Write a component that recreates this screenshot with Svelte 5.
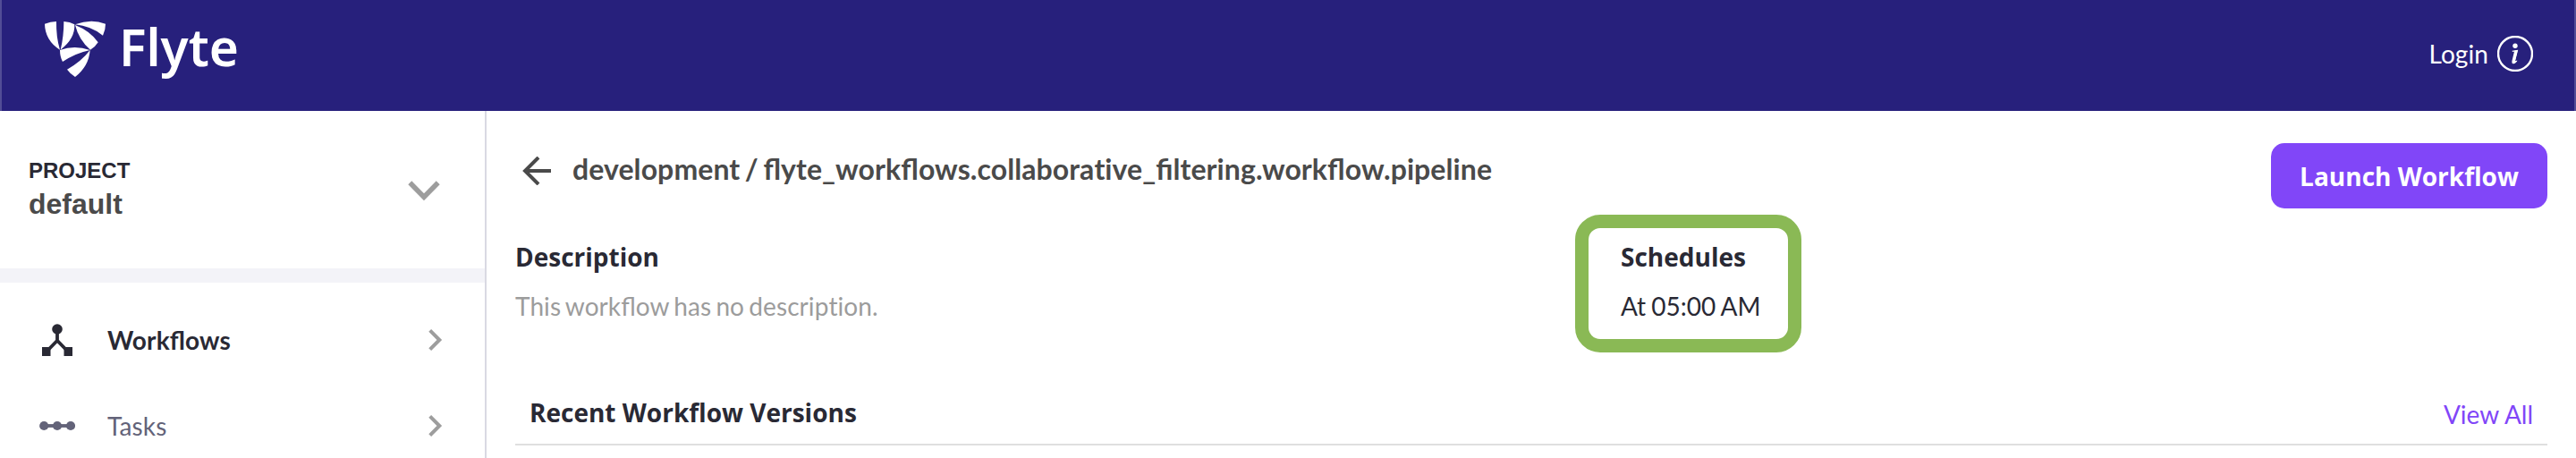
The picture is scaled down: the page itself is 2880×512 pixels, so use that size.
<script>
  const nav = [
    { label: 'Workflows', icon: 'workflow', active: true },
    { label: 'Tasks', icon: 'tasks', active: false }
  ];
</script>

<div class="page">
  <header>
    <svg class="logo" width="224" height="100" viewBox="0 0 224 100" aria-label="Flyte">
      <g transform="translate(-48 -20) scale(.33333)" fill="#fff">
        <path d="M150 80Q169 72 189 72Q188 124 201 167Q151 135 150 80Z" />
        <path d="M214 72Q235 73 250 82Q252 130 203 167Q214 122 214 72Z" />
        <path d="M252 82Q305 62 354 80Q354 100 345 119Q304 87 252 82Z" />
        <path d="M252 84Q303 104 329 142Q320 157 303 167Q265 135 252 84Z" />
        <path d="M201 168Q250 150 302 168Q254 178 210 207Q201 190 201 168Z" />
        <path d="M302 168Q298 222 252 258Q237 249 225 233Q273 206 302 168Z" />
      </g>
      <text x="85" y="54" textLength="134" lengthAdjust="spacingAndGlyphs">Flyte</text>
    </svg>
    <div class="user">
      <span>Login</span>
      <svg width="40" height="40" viewBox="0 0 40 40">
        <circle cx="20" cy="20" r="19" fill="none" stroke="#fff" stroke-width="2.4" />
        <circle cx="20" cy="11.2" r="2.7" fill="#fff" />
        <path d="M16.8 17.4L22.4 16.4L19.6 27.4Q19.2 29.5 22 28.2" fill="none" stroke="#fff" stroke-width="1.2" />
        <path d="M19.2 16.8L22.8 16L20 27.6Q20 29 22.4 27.6Q20.6 31.4 17.8 31.2Q15.8 30.8 16.6 27.4Z" fill="#fff" />
      </svg>
    </div>
  </header>

  <div class="body">
    <aside>
      <div class="project">
        <div>
          <div class="caption">PROJECT</div>
          <div class="name">default</div>
        </div>
        <svg width="36" height="24" viewBox="0 0 36 24"><path d="M2.3 2.3L18 18.2L33.7 2.3" fill="none" stroke="#9d9d9d" stroke-width="5.6" /></svg>
      </div>
      <nav>
        {#each nav as item}
          <div class="item" class:active={item.active}>
            {#if item.icon === 'workflow'}
              <svg class="icon" width="40" height="40" viewBox="0 0 40 40" fill="#292934">
                <circle cx="20" cy="8" r="5.8" />
                <rect x="3" y="28" width="9.5" height="10" />
                <rect x="27.5" y="28" width="9.5" height="10" />
                <path d="M20 10V21M10 31L20 20.7L30 31" fill="none" stroke="#292934" stroke-width="3.8" />
              </svg>
            {:else}
              <svg class="icon" width="40" height="40" viewBox="0 0 40 40" fill="#636379">
                <path d="M5 20H35" stroke="#636379" stroke-width="3.8" />
                <circle cx="5.2" cy="20" r="5.1" />
                <circle cx="20" cy="20" r="5.1" />
                <circle cx="35" cy="20" r="5.1" />
              </svg>
            {/if}
            <span>{item.label}</span>
            <svg width="16" height="24" viewBox="0 0 16 24"><path d="M1.7 1.4L12.3 12L1.7 22.6" fill="none" stroke="#9d9d9d" stroke-width="4" /></svg>
          </div>
        {/each}
      </nav>
    </aside>

    <main>
      <div class="titlebar">
        <svg width="32" height="32" viewBox="0 0 32 32"><path d="M18 1L3 16L18 31M3 16H32" fill="none" stroke="#4a4a4a" stroke-width="4" /></svg>
        <h1>development / flyte_workflows.collabora<span class="plain">ti</span>ve_filtering.workflow.pipeline</h1>
        <button>Launch Workflow</button>
      </div>
      <div class="details">
        <section class="description">
          <h2>Description</h2>
          <p class="muted">This workflow has no descrip<span class="plain">ti</span>on.</p>
        </section>
        <section class="schedules">
          <h2>Schedules</h2>
          <p class="time">At 05:00 AM</p>
        </section>
      </div>
      <div class="versions">
        <h2>Recent Workflow Versions</h2>
        <a href="#all">View All</a>
      </div>
    </main>
  </div>
</div>

<style>
  :global(body) { margin: 0; background: #fff; }
  .page { width: 2880px; height: 512px; overflow: hidden; background: #fff; font-family: Lato, sans-serif; font-size: 28px; color: #292934; }
  .page, .page * { box-sizing: border-box; }
  svg { display: block; flex: none; }
  h1, h2, p { margin: 0; white-space: nowrap; }
  header { height: 124px; background: #27207c; border-left: 2px solid #524d96; border-right: 2px solid #524d96; display: flex; justify-content: space-between; padding: 20px 46px 0; color: #fff; }
  .logo { overflow: visible; }
  .logo text { font: 600 57px "Noto Sans", "Open Sans", sans-serif; fill: #fff; }
  .user { display: flex; align-items: center; height: 40px; margin-top: 20px; gap: 10px; }
  .user span { letter-spacing: .1px; }
  .body { display: flex; height: 388px; }
  aside { width: 544px; flex: none; border-right: 2px solid #d9d9e3; overflow: hidden; }
  .project { height: 192px; border-bottom: 16px solid #f3f3f8; padding: 0 50px 0 32px; display: flex; align-items: center; justify-content: space-between; font-family: "Liberation Sans", Arial, sans-serif; font-weight: 700; }
  .project svg { margin-top: 3px; }
  .caption { font-size: 24px; line-height: 35px; margin-top: -4px; }
  .name { font-size: 32px; line-height: 40px; color: #4a4a4a; }
  nav { padding-top: 16px; }
  .item { height: 96px; display: flex; align-items: center; padding: 0 47px 0 44px; color: #636379; }
  .item span { flex: 1; margin-left: 36px; line-height: 40px; letter-spacing: .15px; font-feature-settings: "liga" 1; }
  .active { color: #292934; font-weight: 700; }
  main { flex: 1; padding: 36px 32px 0; }
  .titlebar { display: flex; height: 73px; }
  .titlebar > svg { margin: 15px 0 0 8px; }
  h1 { flex: 1; margin-left: 24px; font-size: 32px; line-height: 40px; padding-top: 9px; color: #4a4a4a; letter-spacing: .08px; word-spacing: -2.3px; font-feature-settings: "liga" 1; }
  .plain { font-feature-settings: "liga" 0; }
  button { width: 309px; height: 73px; border: 0; border-radius: 15px; background: #8146f8; color: #fff; font: 700 28px "Open Sans", sans-serif; padding: 0; }
  h2 { font: 700 28px/40px "Open Sans", sans-serif; }
  .details { display: flex; height: 161px; padding-top: 7px; }
  .description { width: 1185px; padding-top: 27px; }
  p { line-height: 40px; margin-top: 15px; }
  .muted { color: #9c9c9c; letter-spacing: .08px; word-spacing: -2px; font-feature-settings: "liga" 1; }
  .time { word-spacing: -1px; }
  .schedules { width: 253px; height: 154px; border: 15px solid #8ab955; border-radius: 28px; padding: 12px 0 0 36px; }
  .versions { height: 104px; border-bottom: 2px solid #dfdfdf; display: flex; justify-content: space-between; align-items: flex-end; padding: 0 16px 13px; }
  .versions h2 { margin-bottom: 2px; }
  a { color: #8146f8; text-decoration: none; line-height: 40px; }
</style>
